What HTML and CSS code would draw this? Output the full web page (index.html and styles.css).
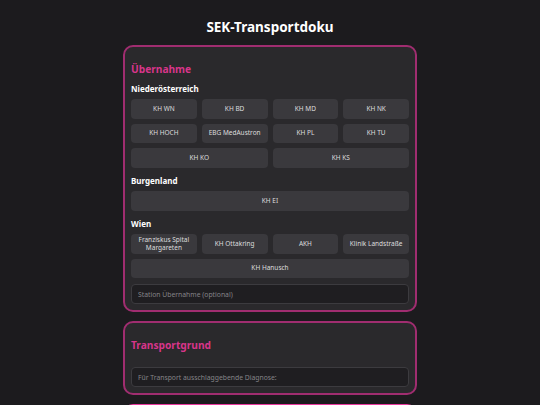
FILE: index.html
```html
<!DOCTYPE html>
<html lang="de">

<head>
    <meta charset="UTF-8">
    <meta name="viewport" content="width=device-width, initial-scale=1.0">
    <title>SEK-Transportdoku</title>
    <link rel="stylesheet" href="styles.css">
</head>

<body>
    <div class="container">
        <h1>SEK-Transportdoku</h1>

        <div class="card">
            <h2>Übernahme</h2>

            <h3>Niederösterreich</h3>
            <div class="btn-grid">
                <button class="station">KH WN</button>
                <button class="station">KH BD</button>
                <button class="station">KH MD</button>
                <button class="station">KH NK</button>
                <button class="station">KH HOCH</button>
                <button class="station">EBG MedAustron</button>
                <button class="station">KH PL</button>
                <button class="station">KH TU</button>
                <button class="station half">KH KO</button>
                <button class="station half">KH KS</button>
            </div>

            <h3>Burgenland</h3>
            <div class="btn-grid">
                <button class="station full">KH EI</button>
            </div>

            <h3>Wien</h3>
            <div class="btn-grid">
                <button class="station">Franziskus Spital Margareten</button>
                <button class="station">KH Ottakring</button>
                <button class="station">AKH</button>
                <button class="station">Klinik Landstraße</button>
                <button class="station full">KH Hanusch</button>
            </div>

            <input type="text" class="text-input" placeholder="Station Übernahme (optional)">
        </div>

        <div class="card">
            <h2>Transportgrund</h2>
            <input type="text" class="text-input spaced" placeholder="Für Transport ausschlaggebende Diagnose:">
        </div>

        <div class="card active"></div>
    </div>
</body>

</html>
```

FILE: styles.css
```css
body {
    margin: 0;
    background-color: #1c1b1e;
    color: #eee;
    font-family: "Noto Sans", "Open Sans", sans-serif;
}

.container {
    width: 294px;
    margin: 0 auto;
}

h1 {
    font-size: 13.5px;
    line-height: 20px;
    text-align: center;
    color: #fff;
    margin: 17px 0 8px;
}

.card {
    background-color: #2a292c;
    border: 2px solid #a02d70;
    border-radius: 10px;
    padding: 14px 6px 6px;
    margin-bottom: 9px;
}

.card.active {
    border-color: #e8389d;
    height: 60px;
}

h2 {
    font-size: 10.2px;
    line-height: 16px;
    color: #d8358a;
    margin: 0 0 6px;
}

h3 {
    font-size: 8px;
    line-height: 12px;
    color: #fff;
    margin: 7.5px 0 4px;
}

h2 + h3 {
    margin-top: 0;
}

.btn-grid {
    display: grid;
    grid-template-columns: repeat(4, 1fr);
    gap: 5px;
}

.station {
    height: 19.5px;
    padding: 0 2px;
    border: none;
    border-radius: 4px;
    background-color: #3a393d;
    color: #ddd;
    font-family: inherit;
    font-size: 6.5px;
    line-height: 8px;
    cursor: pointer;
}

.station:hover {
    background-color: #454448;
}

.station.half {
    grid-column: span 2;
}

.station.full {
    grid-column: span 4;
}

.text-input {
    display: block;
    box-sizing: border-box;
    width: 100%;
    height: 20px;
    margin-top: 6px;
    padding: 0 6px;
    background-color: #1f1e21;
    border: 1px solid #3c3b3f;
    border-radius: 4px;
    color: #ddd;
    font-family: inherit;
    font-size: 6.8px;
}

.text-input::placeholder {
    color: #858488;
}

.text-input.spaced {
    margin-top: 14px;
}
```
